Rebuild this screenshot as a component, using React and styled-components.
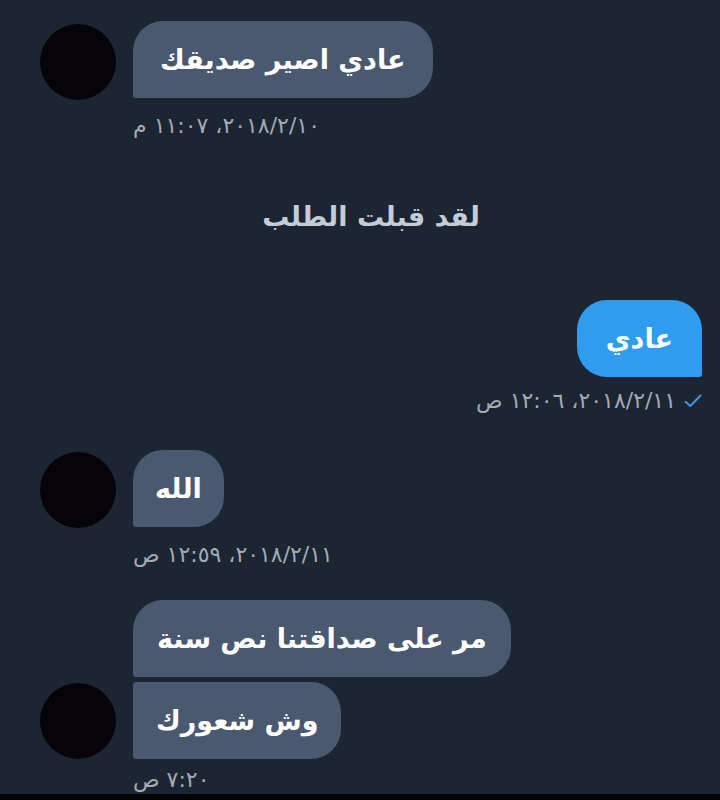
import React from "react";
import styled, { createGlobalStyle } from "styled-components";

const Global = createGlobalStyle`
  html, body { margin: 0; padding: 0; background: #000; }
  body { font-family: "DejaVu Sans", "Noto Sans", sans-serif; }
`;

const Screen = styled.div`
  width: 720px;
  height: 794px;
  overflow: hidden;
  background: #1c2532;
  box-sizing: border-box;
  padding: 21px 18px 0 40px;
  display: flex;
  flex-direction: column;
`;

const Incoming = styled.div`
  display: flex;
  flex-direction: column;
  align-items: flex-start;
  margin-top: ${(p) => p.$mt || 0}px;
`;

const Row = styled.div`
  display: flex;
  align-items: flex-end;
  gap: 17px;
`;

const Avatar = styled.div`
  width: 76px;
  height: 76px;
  border-radius: 50%;
  background: #060409;
  flex: none;
  margin-bottom: ${(p) => p.$mb || 0}px;
`;

const Bubbles = styled.div`
  display: flex;
  flex-direction: column;
  align-items: flex-start;
  gap: 5px;
`;

const Bubble = styled.div`
  height: 77px;
  box-sizing: border-box;
  padding: 0 ${(p) => p.$px || 27}px;
  display: flex;
  align-items: center;
  justify-content: center;
  background: ${(p) => (p.$blue ? "#2f9cf0" : "#4a5970")};
  color: #fff;
  font-size: 27px;
  font-weight: bold;
  direction: rtl;
  white-space: nowrap;
  border-radius: ${(p) => p.$radius};
`;

const Stamp = styled.div`
  direction: rtl;
  font-size: 22px;
  line-height: 20px;
  color: #a3abb6;
  margin-top: ${(p) => p.$mt ?? 18}px;
  margin-left: ${(p) => p.$ml || 0}px;
  white-space: nowrap;
`;

const System = styled.div`
  align-self: center;
  margin-top: 64px;
  font-size: 27px;
  font-weight: bold;
  line-height: 34px;
  color: #c4ccd8;
  direction: rtl;
`;

const Outgoing = styled.div`
  display: flex;
  flex-direction: column;
  align-items: flex-end;
  margin-top: ${(p) => p.$mt || 0}px;
`;

const StampRow = styled.div`
  display: flex;
  direction: rtl;
  align-items: center;
  gap: 8px;
  margin-top: 14px;
`;

const Check = () => (
  <svg width="18" height="14" viewBox="0 0 18 14" fill="none">
    <path d="M1.5 7.8 L6.3 12 L16.5 1.5" stroke="#4a93de" strokeWidth="2" strokeLinecap="round" strokeLinejoin="round" />
  </svg>
);

const R_IN = "30px 30px 30px 3px";
const R_IN_LAST = "3px 30px 30px 3px";
const R_OUT = "30px 30px 3px 30px";

export default function App() {
  return (
    <>
      <Global />
      <Screen>
        <Incoming>
          <Row>
            <Avatar $mb={-2} />
            <Bubble $radius={R_IN}>عادي اصير صديقك</Bubble>
          </Row>
          <Stamp $ml={93}>٢٠١٨/٢/١٠، ١١:٠٧ م</Stamp>
        </Incoming>

        <System>لقد قبلت الطلب</System>

        <Outgoing $mt={66}>
          <Bubble $blue $radius={R_OUT} $px={29}>عادي</Bubble>
          <StampRow>
            <Check />
            <Stamp $mt={0}>٢٠١٨/٢/١١، ١٢:٠٦ ص</Stamp>
          </StampRow>
        </Outgoing>

        <Incoming $mt={39}>
          <Row>
            <Avatar $mb={-1} />
            <Bubble $radius={R_IN} $px={22}>الله</Bubble>
          </Row>
          <Stamp $ml={93} $mt={18}>٢٠١٨/٢/١١، ١٢:٥٩ ص</Stamp>
        </Incoming>

        <Incoming $mt={35}>
          <Row>
            <Avatar />
            <Bubbles>
              <Bubble $radius={R_IN} $px={24}>مر على صداقتنا نص سنة</Bubble>
              <Bubble $radius={R_IN_LAST} $px={23}>وش شعورك</Bubble>
            </Bubbles>
          </Row>
          <Stamp $ml={93} $mt={11}>٧:٢٠ ص</Stamp>
        </Incoming>
      </Screen>
    </>
  );
}
